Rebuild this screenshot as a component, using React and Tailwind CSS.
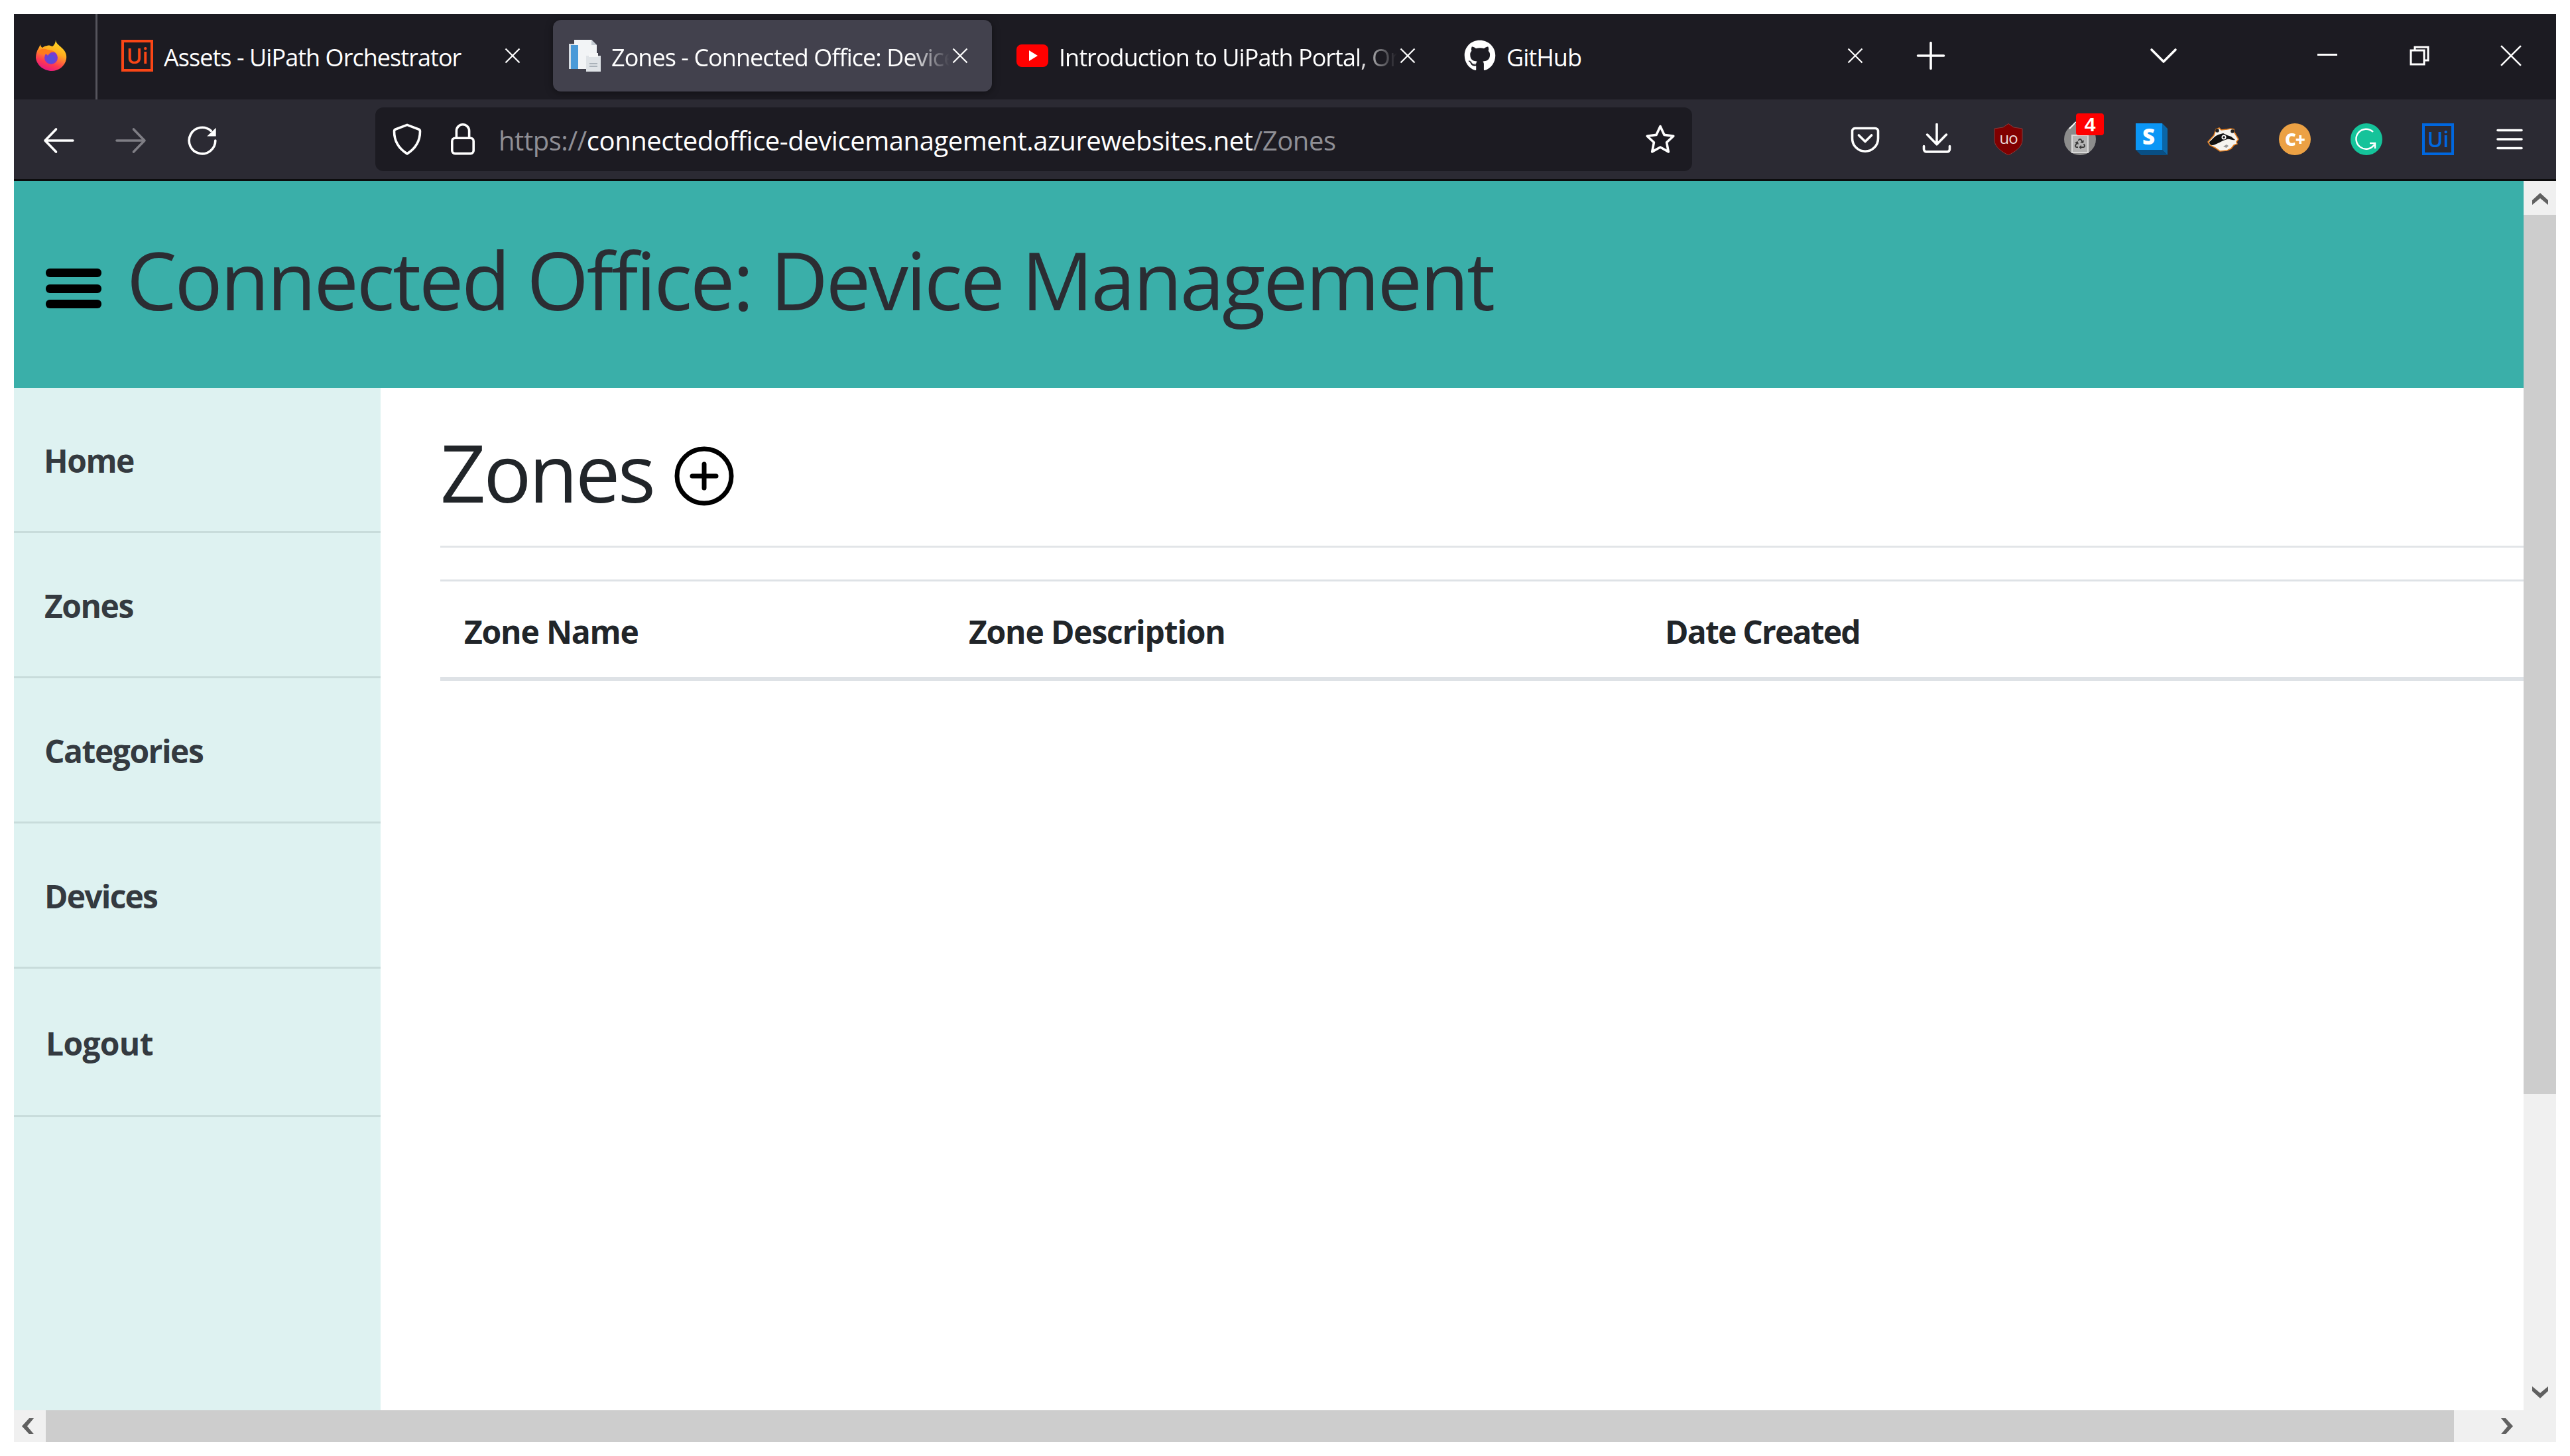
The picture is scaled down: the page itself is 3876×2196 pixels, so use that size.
import React from "react";
import { FaGithub, FaRecycle } from "react-icons/fa";

const uiFont = "font-['Open_Sans',sans-serif]";

// 16-unit Firefox toolbar glyph drawn at 48px
function Glyph({ children, className = "" }) {
  return (
    <svg viewBox="0 0 16 16" className={`w-12 h-12 ${className}`} fill="none" stroke="currentColor" strokeWidth="1.2" strokeLinecap="round" strokeLinejoin="round">
      {children}
    </svg>
  );
}

function FirefoxLogo() {
  return (
    <svg viewBox="0 0 48 48" className="w-12 h-12">
      <defs>
        <linearGradient id="fx" x1="0.75" y1="0" x2="0.35" y2="1">
          <stop offset="0" stopColor="#ffe226" />
          <stop offset="0.4" stopColor="#ffab1f" />
          <stop offset="0.75" stopColor="#ff3b4e" />
          <stop offset="1" stopColor="#e31587" />
        </linearGradient>
      </defs>
      <path d="M30 0c0 5 5 8 9 12 6 5 8 11 7 17-2 11-12 18-22 18C12 47 1 38 0 27c0-6 2-11 4-14l3-6c0 2 1 4 3 5 2-2 5-3 7-3 3-1 5 0 8 1 3-2 5-6 5-10z" fill="url(#fx)" />
      <circle cx="23" cy="27" r="10" fill="#7a3bd0" />
      <circle cx="23" cy="29" r="6.500" fill="#5b4bd8" />
      <path d="M3 18c4-5 10-5 15-3 5 1 9 1 11 4-5-1-8 0-11 5-1-3-4-2-6-2-2 1-6 0-9-4z" fill="#ff7a1c" />
    </svg>
  );
}

function UiLogo({ color, text }) {
  return (
    <div className={`w-12 h-12 flex items-center justify-center border-[4px] ${color.border}`}>
      <span className={`text-[32px] leading-none font-semibold ${color.text} ${uiFont}`}>{text}</span>
    </div>
  );
}

function ZonesFavicon() {
  return (
    <svg viewBox="0 0 48 48" className="w-12 h-12">
      <path d="M8 0h26l8 8v36H8z" fill="#f2f4f6" />
      <rect x="0" y="6" width="8" height="38" fill="#d7dde3" />
      <rect x="3" y="8" width="11" height="36" fill="#4a9ad8" />
      <path d="M34 0v8h8" fill="#c5ccd3" />
      <rect x="26" y="24" width="22" height="24" fill="#dfe3e7" />
      <rect x="30" y="20" width="14" height="6" fill="#f5f6f7" />
      <path d="M31 36h12M31 40h12" stroke="#aab2ba" strokeWidth="2" />
    </svg>
  );
}

function YoutubeLogo() {
  return (
    <svg viewBox="0 0 48 48" className="w-12 h-12">
      <rect x="0" y="7" width="48" height="34" rx="8" fill="#ff0000" />
      <path d="M19 16l13 8-13 8z" fill="#fff" />
    </svg>
  );
}

function Tab({ icon, title, active, fade }) {
  return (
    <div className={`w-[662px] h-[108px] shrink-0 mr-[13px] flex items-center pl-[24px] rounded-[12px] ${active ? "bg-[#42414d] shadow-[0_2px_12px_rgba(0,0,0,0.4)]" : ""}`}>
      <div className="w-12 h-12 shrink-0">{icon}</div>
      <div className={`ml-[16px] w-[510px] pt-[5px] overflow-hidden whitespace-nowrap shrink-0 text-white text-[36px] tracking-[-0.95px] ${fade ? "[mask-image:linear-gradient(to_right,black_88%,transparent_100%)]" : ""}`}>
        {title}
      </div>
      <svg viewBox="0 0 16 16" className="w-[24px] h-[24px] ml-[4px] text-white shrink-0" fill="none" stroke="currentColor" strokeWidth="1.5">
        <path d="M1 1l14 14M15 1L1 15" />
      </svg>
    </div>
  );
}

function ToolButton({ children, className = "" }) {
  return <div className={`w-[108px] h-[120px] flex items-center justify-center shrink-0 ${className}`}>{children}</div>;
}

function UblockIcon() {
  return (
    <svg viewBox="0 0 48 48" className="w-12 h-12">
      <path d="M24 .5L32 6l13 2v18c0 10-13 18-21 22C16 44 3 36 3 26V8l13-2z" fill="#800000" stroke="#8a3a3a" strokeWidth="1" />
      <text x="24" y="31" textAnchor="middle" fontSize="24" letterSpacing="-1" fill="#eadcdc" fontFamily="Open Sans, sans-serif">uo</text>
    </svg>
  );
}

function RecycleIcon() {
  return (
    <div className="relative w-12 h-12">
      <div className="w-12 h-12 rounded-full bg-[#8c8c8c] flex items-end justify-center pb-[3px]">
        <div className="w-[26px] h-[28px] bg-[#b5b5b5] border-2 border-[#d9d9d9] flex items-center justify-center">
          <FaRecycle className="text-[#3c3c3c] w-[16px] h-[16px]" />
        </div>
      </div>
      <div className="absolute left-[6px] top-[2px] w-[14px] h-[2px] bg-white rotate-[-45deg]" />
      <span className="absolute left-[18px] top-[-15px] w-[42px] h-[33px] rounded-[4px] bg-[#ff0000] text-white text-[30px] leading-[33px] font-bold text-center font-['Liberation_Sans',sans-serif]">4</span>
    </div>
  );
}

function StackIcon() {
  return (
    <svg viewBox="0 0 48 48" className="w-12 h-12">
      <path d="M40 0l8 8v40l-8-8z" fill="#0a66a8" />
      <path d="M0 40h40l8 8H8z" fill="#084f85" />
      <rect x="0" y="0" width="40" height="40" fill="#0b96f5" />
      <text x="19.500" y="32" textAnchor="middle" fontSize="33" fontWeight="800" fill="#fff" fontFamily="Open Sans, sans-serif">S</text>
    </svg>
  );
}

function BadgerIcon() {
  return (
    <svg viewBox="0 0 48 48" className="w-12 h-12">
      <path d="M1 28l9-10 3-9 5-2 3 3 9-1 5-1 5 1 1 5 3 5 3 5-3 4 1 3-5 2-4 5-6 3-11 1-7-5-8-4z" fill="#f6f4ef" stroke="#e07b1c" strokeWidth="1.600" />
      <path d="M3 28c5-4 8-9 14-11l7-2 6 3 6 2 6 5c-5 1-8-2-12-1-8 2-16 8-22 9-3 0-5-2-5-5z" fill="#111" />
      <circle cx="25" cy="21" r="3.500" fill="#fff" />
      <circle cx="25" cy="21" r="1.800" fill="#111" />
      <circle cx="15" cy="11" r="2.800" fill="#222" />
      <circle cx="38" cy="12" r="2.800" fill="#222" />
      <path d="M24 35l5-3 3 2-3 3z" fill="#9a9a9a" />
    </svg>
  );
}

function CouponIcon() {
  return (
    <div className="w-12 h-12 rounded-full bg-[#eca144] flex items-center justify-center">
      <span className="text-white text-[26px] font-extrabold leading-none tracking-[-1px] font-['Open_Sans',sans-serif]">C+</span>
    </div>
  );
}

function GrammarlyIcon() {
  return (
    <svg viewBox="0 0 48 48" className="w-12 h-12">
      <circle cx="24" cy="24" r="24" fill="#15c39a" />
      <path d="M34 13a15 15 0 1 0 2 19" fill="none" stroke="#fff" strokeWidth="2.400" />
      <path d="M29 30h8v8" fill="none" stroke="#fff" strokeWidth="2.400" />
    </svg>
  );
}

function ScrollChevron({ d, className = "" }) {
  return (
    <svg viewBox="0 0 24 24" className={`w-[24px] h-[24px] text-[#606060] ${className}`} fill="currentColor">
      <path d={d} />
    </svg>
  );
}

const sideItems = [
  { label: "Home", h: "h-[219px]", pl: "pl-[45px]", track: "tracking-[-1.5px]" },
  { label: "Zones", h: "h-[219px]", pl: "pl-[46px]", track: "tracking-[-1.5px]" },
  { label: "Categories", h: "h-[219px]", pl: "pl-[46px]", track: "tracking-[-1.5px]" },
  { label: "Devices", h: "h-[219px]", pl: "pl-[46px]", track: "tracking-[-1.8px]" },
  { label: "Logout", h: "h-[224px]", pl: "pl-[48px]", track: "tracking-[-0.7px]" },
];

export default function App() {
  return (
    <div className={`w-[3876px] h-[2196px] bg-white pl-[21px] pt-[21px] overflow-hidden ${uiFont}`}>
      <div className="w-[3834px] h-[2154px] flex flex-col">
        {/* Tab strip */}
        <div className="h-[129px] bg-[#1c1b22] flex items-start shrink-0">
          <div className="w-[123px] h-full flex items-center justify-center pr-[10px] pb-[4px]">
            <FirefoxLogo />
          </div>
          <div className="w-[3px] h-full bg-[#55545c]" />
          <div className="flex items-start pl-[12px] pt-[9px]">
            <Tab icon={<UiLogo color={{ border: "border-[#fa4616]", text: "text-[#fa4616]" }} text="Ui" />} title="Assets - UiPath Orchestrator" />
            <Tab active fade icon={<ZonesFavicon />} title="Zones - Connected Office: Device Management" />
            <Tab fade icon={<YoutubeLogo />} title="Introduction to UiPath Portal, Orchestrator" />
            <Tab icon={<FaGithub className="w-12 h-12 text-white" />} title="GitHub" />
          </div>
          <div className="w-[108px] h-[108px] mt-[9px] -ml-[1px] flex items-center justify-center text-white">
            <Glyph><path d="M8 1.500v13M1.500 8h13" /></Glyph>
          </div>
          <div className="w-[108px] h-[108px] mt-[9px] ml-[243px] flex items-center justify-center text-white">
            <Glyph><path d="M2 5l6 6 6-6" /></Glyph>
          </div>
          <div className="ml-[124px] flex mt-[18px] text-white">
            <div className="w-[138px] h-[90px] flex items-center justify-center">
              <div className="w-[30px] h-[3px] bg-white mb-[4px]" />
            </div>
            <div className="w-[138px] h-[90px] flex items-center justify-center">
              <svg viewBox="0 0 30 30" className="w-[30px] h-[30px] ml-[2px]" fill="none" stroke="currentColor" strokeWidth="3">
                <path d="M8 6V2h20v20h-6" />
                <rect x="2" y="7" width="20" height="21" />
              </svg>
            </div>
            <div className="w-[138px] h-[90px] flex items-center justify-center">
              <svg viewBox="0 0 30 30" className="w-[32px] h-[32px] ml-[2px]" fill="none" stroke="currentColor" strokeWidth="2.400">
                <path d="M1 1l28 28M29 1L1 29" />
              </svg>
            </div>
          </div>
        </div>

        {/* Navigation toolbar */}
        <div className="h-[120px] bg-[#2b2a33] flex items-center pl-[14px] pr-[16px] shrink-0 text-white">
          <ToolButton>
            <Glyph className="mt-[3px]"><path d="M15 8H1M6.500 2.300L1 8l5.500 5.700" /></Glyph>
          </ToolButton>
          <ToolButton className="text-[#7f7e85]">
            <Glyph className="mt-[3px]"><path d="M1 8h14M9.500 2.300L15 8l-5.500 5.700" /></Glyph>
          </ToolButton>
          <ToolButton>
            <Glyph className="mt-[3px]">
              <path d="M14.600 8a6.600 6.600 0 1 1-2.200-4.900" />
              <path d="M14.900 1.600v4.200h-4.500z" fill="currentColor" stroke="none" />
            </Glyph>
          </ToolButton>
          <div className="ml-[207px] w-[1986px] h-[96px] rounded-[12px] bg-[#1c1b22] flex items-center shrink-0 pl-[24px] pr-[24px]">
            <Glyph className="shrink-0"><path d="M8 .800L13.800 3q.700.300.700 1c0 5-2 8.500-6.500 11.300C3.500 12.500 1.500 9 1.500 4q0-.700.700-1z" /></Glyph>
            <Glyph className="ml-[36px] shrink-0">
              <path d="M4.800 7.400V3.800a3.200 3.200 0 0 1 6.400 0v3.600" />
              <rect x="2.600" y="7.400" width="10.800" height="7.800" rx="1.500" />
            </Glyph>
            <div className="ml-[30px] pt-[3px] text-[40px] tracking-[-0.45px] whitespace-nowrap text-[#8f8f95]">
              https://<span className="text-white">connectedoffice-devicemanagement.azurewebsites.net</span>/Zones
            </div>
            <Glyph className="ml-auto shrink-0"><path d="M8 1.500l2 4.300 4.600.6-3.400 3.200.9 4.700L8 12l-4.100 2.300.9-4.700L1.400 6.400 6 5.800z" /></Glyph>
          </div>
          <div className="ml-auto flex">
            <ToolButton>
              <Glyph>
                <path d="M1.500 4c0-.9.6-1.500 1.500-1.500h10c.9 0 1.500.6 1.500 1.500v3.600c0 3.600-2.900 6.500-6.500 6.500s-6.500-2.900-6.500-6.500z" />
                <path d="M4.800 6L8 9.200 11.200 6" />
              </Glyph>
            </ToolButton>
            <ToolButton>
              <Glyph>
                <path d="M8 .5v10M3.200 5.700L8 10.600l4.800-4.900" />
                <path d="M1.500 11.500V13c0 .8.600 1.300 1.300 1.300h10.400c.7 0 1.300-.5 1.300-1.300v-1.500" />
              </Glyph>
            </ToolButton>
            <ToolButton><UblockIcon /></ToolButton>
            <ToolButton><RecycleIcon /></ToolButton>
            <ToolButton><StackIcon /></ToolButton>
            <ToolButton><BadgerIcon /></ToolButton>
            <ToolButton><CouponIcon /></ToolButton>
            <ToolButton><GrammarlyIcon /></ToolButton>
            <ToolButton><UiLogo color={{ border: "border-[#0067df]", text: "text-[#0067df]" }} text="Ui" /></ToolButton>
            <ToolButton>
              <Glyph><path d="M2 3.500h12M2 8h12M2 12.500h12" /></Glyph>
            </ToolButton>
          </div>
        </div>
        <div className="h-[3px] bg-[#0c0c0d] shrink-0" />

        {/* Page viewport */}
        <div className="flex h-[1854px] shrink-0">
          <div className="w-[3785px] flex flex-col">
            <header className="h-[312px] bg-[#3aafa9] flex items-center shrink-0 pl-[48px]">
              <svg viewBox="0 0 84 60" className="w-[84px] h-[60px] mt-[12px]" fill="#000">
                <rect x="0" y="0" width="84" height="13" rx="6" />
                <rect x="0" y="24" width="84" height="13" rx="6" />
                <rect x="0" y="47" width="84" height="13" rx="6" />
              </svg>
              <h1 className="ml-[38px] mb-[14px] text-[120px] leading-none font-normal text-[#2b2d33] whitespace-nowrap tracking-[-3.1px]">
                Connected Office: Device Management
              </h1>
            </header>
            <div className="flex flex-1 min-h-0">
              <aside className="w-[553px] bg-[#def2f1] shrink-0">
                {sideItems.map((item) => (
                  <div key={item.label} className={`${item.h} ${item.pl} ${item.track} pt-[4px] flex items-center border-b-[3px] border-[#c8dcdb] text-[48px] font-bold text-[#343a40]`}>
                    {item.label}
                  </div>
                ))}
              </aside>
              <main className="flex-1 bg-white pl-[90px] min-w-0">
                <div className="h-[241px] border-b-[3px] border-[#e2e5e8] flex items-start pt-[57px]">
                  <h2 className="text-[120px] leading-[140px] font-normal text-[#212529] tracking-[-3.5px]">Zones</h2>
                  <svg viewBox="0 0 90 90" className="w-[90px] h-[90px] ml-[31px] mt-[31px]" fill="none" stroke="#000" strokeWidth="7" strokeLinecap="round">
                    <circle cx="45" cy="45" r="41" />
                    <path d="M45 27v36M27 45h36" />
                  </svg>
                </div>
                <table className="mt-[48px] w-full table-fixed border-t-[3px] border-[#dee2e6] text-[48px] text-[#212529]">
                  <thead>
                    <tr className="h-[148px] border-b-[6px] border-[#dee2e6]">
                      <th className="w-[762px] pl-[36px] pt-[8px] text-left font-bold tracking-[-1.2px]">Zone Name</th>
                      <th className="w-[1050px] pl-[35px] pt-[8px] text-left font-bold tracking-[-1.2px]">Zone Description</th>
                      <th className="pl-[35px] pt-[8px] text-left font-bold tracking-[-1.8px]">Date Created</th>
                    </tr>
                  </thead>
                </table>
              </main>
            </div>
          </div>
          {/* Vertical scrollbar */}
          <div className="w-[49px] bg-[#f0f0f0] flex flex-col shrink-0">
            <div className="h-[51px] flex items-center justify-center">
              <ScrollChevron d="M12 4L24 15v7L12 12 0 22v-7z" />
            </div>
            <div className="h-[1326px] bg-[#cdcdcd]" />
            <div className="flex-1 flex items-end justify-center pb-[14px]">
              <ScrollChevron d="M12 20L24 9V2L12 12 0 2v7z" />
            </div>
          </div>
        </div>

        {/* Horizontal scrollbar */}
        <div className="h-[48px] flex bg-[#f0f0f0] shrink-0">
          <div className="w-[48px] flex items-center pl-[8px]">
            <ScrollChevron d="M4 12L15 0h7L12 12l10 12h-7z" />
          </div>
          <div className="w-[3632px] bg-[#cdcdcd]" />
          <div className="flex-1 flex items-center pl-[69px]">
            <ScrollChevron d="M20 12L9 0H2l10 12L2 24h7z" />
          </div>
        </div>
      </div>
    </div>
  );
}
